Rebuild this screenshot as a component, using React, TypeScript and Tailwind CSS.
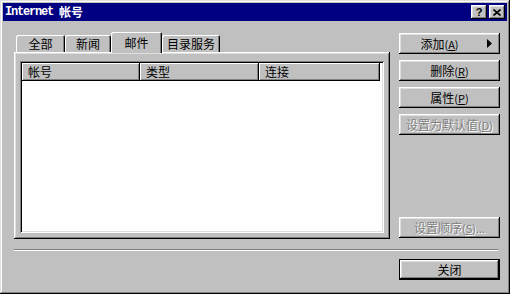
import React from "react";

const font = "font-['Noto_Sans_CJK_SC',sans-serif] text-[12px] leading-none text-black";
const raised =
  "bg-[#c0c0c0] shadow-[inset_-1px_-1px_#000,inset_1px_1px_#fff,inset_-2px_-2px_#808080,inset_2px_2px_#dfdfdf]";

const Btn = ({
  label,
  k,
  disabled,
  arrow,
  className = "",
}: {
  label: string;
  k?: string;
  disabled?: boolean;
  arrow?: boolean;
  className?: string;
}) => (
  <div
    className={`relative flex h-[21px] w-[101px] items-center justify-center ${raised} ${
      disabled ? "text-[#808080] [text-shadow:1px_1px_0_#fff]" : "text-black"
    } ${className}`}
  >
    <span className={arrow ? "pr-[20px]" : ""}>
      {label}
      {k && (
        <span className="text-[11px]">
          (<span className="underline">{k}</span>){label === "设置顺序" ? "..." : ""}
        </span>
      )}
    </span>
    {arrow && (
      <svg className="absolute right-[8px] top-[6px]" width="5" height="9" viewBox="0 0 5 9">
        <path d="M0 0 L5 4.5 L0 9 Z" fill="#000" />
      </svg>
    )}
  </div>
);

const tabs = [
  { name: "全部", w: "w-[49px]" },
  { name: "新闻", w: "w-[46px]" },
  { name: "邮件", w: "w-[51px]", active: true },
  { name: "目录服务", w: "w-[58px]" },
];

const cols = [
  { name: "帐号", w: "w-[118px]" },
  { name: "类型", w: "w-[119px]" },
  { name: "连接", w: "flex-1" },
];

export default function App() {
  return (
    <div
      className={`flex h-[294px] w-[510px] flex-col bg-[#c0c0c0] p-[3px] ${font} shadow-[inset_-1px_-1px_#000,inset_1px_1px_#dfdfdf,inset_-2px_-2px_#808080,inset_2px_2px_#fff]`}
    >
      {/* title bar */}
      <div className="flex h-[18px] items-center justify-between bg-[#000080] pl-[2px] pr-[2px]">
        <div className="flex items-center text-white">
          <span className="font-['Liberation_Mono',monospace] text-[12px] font-bold tracking-[-1.2px]">
            Internet
          </span>
          <span className="ml-[6px] font-bold">帐号</span>
        </div>
        <div className="flex gap-[2px]">
          <div className={`flex h-[14px] w-[16px] items-center justify-center ${raised}`}>
            <span className="font-['Liberation_Sans',sans-serif] text-[11px] font-bold leading-none">?</span>
          </div>
          <div className={`flex h-[14px] w-[16px] items-center justify-center ${raised}`}>
            <svg width="8" height="7" viewBox="0 0 8 7">
              <path d="M0.5 0.5 L7.5 6.5 M7.5 0.5 L0.5 6.5" stroke="#000" strokeWidth="1.6" />
            </svg>
          </div>
        </div>
      </div>

      {/* main area */}
      <div className="mt-[11px] flex pl-[11px]">
        <div className="flex w-[376px] flex-col">
          <div className="flex h-[20px] items-end pl-[2px]">
            {tabs.map((t) =>
              t.active ? (
                <div
                  key={t.name}
                  className={`relative z-10 mb-[-1px] flex h-[21px] ${t.w} items-start justify-center rounded-t-[2px] bg-[#c0c0c0] pt-[5px] shadow-[inset_1px_1px_#fff,inset_-1px_0_#000,inset_-2px_0_#808080]`}
                >
                  {t.name}
                </div>
              ) : (
                <div
                  key={t.name}
                  className={`flex h-[17px] ${t.w} items-center justify-center rounded-t-[2px] bg-[#c0c0c0] pt-[1px] shadow-[inset_1px_1px_#fff,inset_-1px_0_#000,inset_-2px_0_#808080]`}
                >
                  {t.name}
                </div>
              )
            )}
          </div>
          <div className="h-[187px] bg-[#c0c0c0] px-[6px] pb-[6px] pt-[9px] shadow-[inset_-1px_-1px_#000,inset_1px_1px_#fff,inset_-2px_-2px_#808080,inset_2px_2px_#dfdfdf]">
            <div className="flex h-full flex-col bg-white p-[2px] shadow-[inset_1px_1px_#808080,inset_-1px_-1px_#fff,inset_2px_2px_#000,inset_-2px_-2px_#dfdfdf]">
              <div className="flex h-[18px] pr-[2px]">
                {cols.map((c) => (
                  <div
                    key={c.name}
                    className={`flex h-full ${c.w} items-center pl-[6px] ${raised} shadow-[inset_-1px_-1px_#000,inset_1px_1px_#fff,inset_-2px_-2px_#808080]`}
                  >
                    {c.name}
                  </div>
                ))}
              </div>
              <div className="flex-1 bg-white" />
            </div>
          </div>
        </div>

        <div className="ml-[9px] flex flex-col gap-[6px] pb-[1px] pt-[1px]">
          <Btn label="添加" k="A" arrow />
          <Btn label="删除" k="R" />
          <Btn label="属性" k="P" />
          <Btn label="设置为默认值" k="D" disabled />
          <Btn label="设置顺序" k="S" disabled className="mt-auto" />
        </div>
      </div>

      {/* separator */}
      <div className="ml-[11px] mt-[10px] h-[2px] w-[484px] border-b border-t border-b-white border-t-[#808080]" />

      {/* bottom row */}
      <div className="mt-[8px] flex justify-end pr-[7px]">
        <div className="border border-black">
          <div className={`flex h-[19px] w-[99px] items-center justify-center ${raised}`}>关闭</div>
        </div>
      </div>
    </div>
  );
}
